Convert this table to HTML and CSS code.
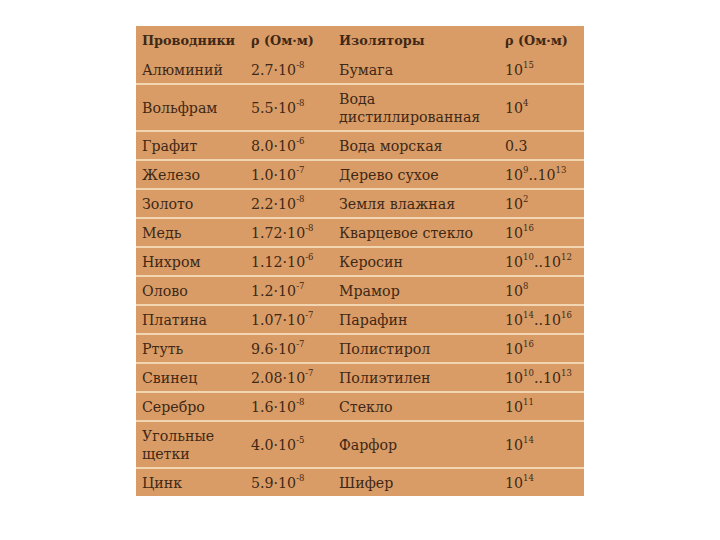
FILE: index.html
```html
<!DOCTYPE html>
<html lang="ru">
<head>
<meta charset="utf-8">
<link rel="stylesheet" href="styles.css">
</head>
<body>
<div class="page">
  <div class="table">
    <div class="row head">
      <div class="c">Проводники</div><div class="c">ρ (Ом·м)</div><div class="c">Изоляторы</div><div class="c">ρ (Ом·м)</div>
    </div>
    <div class="row"><div class="c">Алюминий</div><div class="c">2.7·10<sup>-8</sup></div><div class="c">Бумага</div><div class="c">10<sup>15</sup></div></div>
    <div class="row"><div class="c">Вольфрам</div><div class="c">5.5·10<sup>-8</sup></div><div class="c">Вода<br>дистиллированная</div><div class="c">10<sup>4</sup></div></div>
    <div class="row"><div class="c">Графит</div><div class="c">8.0·10<sup>-6</sup></div><div class="c">Вода морская</div><div class="c">0.3</div></div>
    <div class="row"><div class="c">Железо</div><div class="c">1.0·10<sup>-7</sup></div><div class="c">Дерево сухое</div><div class="c">10<sup>9</sup>..10<sup>13</sup></div></div>
    <div class="row"><div class="c">Золото</div><div class="c">2.2·10<sup>-8</sup></div><div class="c">Земля влажная</div><div class="c">10<sup>2</sup></div></div>
    <div class="row"><div class="c">Медь</div><div class="c">1.72·10<sup>-8</sup></div><div class="c">Кварцевое стекло</div><div class="c">10<sup>16</sup></div></div>
    <div class="row"><div class="c">Нихром</div><div class="c">1.12·10<sup>-6</sup></div><div class="c">Керосин</div><div class="c">10<sup>10</sup>..10<sup>12</sup></div></div>
    <div class="row"><div class="c">Олово</div><div class="c">1.2·10<sup>-7</sup></div><div class="c">Мрамор</div><div class="c">10<sup>8</sup></div></div>
    <div class="row"><div class="c">Платина</div><div class="c">1.07·10<sup>-7</sup></div><div class="c">Парафин</div><div class="c">10<sup>14</sup>..10<sup>16</sup></div></div>
    <div class="row"><div class="c">Ртуть</div><div class="c">9.6·10<sup>-7</sup></div><div class="c">Полистирол</div><div class="c">10<sup>16</sup></div></div>
    <div class="row"><div class="c">Свинец</div><div class="c">2.08·10<sup>-7</sup></div><div class="c">Полиэтилен</div><div class="c">10<sup>10</sup>..10<sup>13</sup></div></div>
    <div class="row"><div class="c">Серебро</div><div class="c">1.6·10<sup>-8</sup></div><div class="c">Стекло</div><div class="c">10<sup>11</sup></div></div>
    <div class="row"><div class="c">Угольные<br>щетки</div><div class="c">4.0·10<sup>-5</sup></div><div class="c">Фарфор</div><div class="c">10<sup>14</sup></div></div>
    <div class="row last"><div class="c">Цинк</div><div class="c">5.9·10<sup>-8</sup></div><div class="c">Шифер</div><div class="c">10<sup>14</sup></div></div>
  </div>
</div>
</body>
</html>
```
FILE: styles.css
```css
html, body {
  margin: 0;
  padding: 0;
  background: #ffffff;
}
.page {
  padding: 26px 0 0 136px;
}
.table {
  width: 448px;
  background: #d99c67;
  font-family: "DejaVu Serif", "Liberation Serif", serif;
  font-size: 14.2px;
  color: #3f2815;
}
.row {
  display: grid;
  grid-template-columns: 109px 88px 166px 85px;
  align-items: center;
  border-bottom: 2px solid #f2d6b2;
}
.row.head {
  border-bottom: none;
  font-weight: bold;
  font-size: 12.8px;
  height: 30px;
}
.row.head .c {
  padding-top: 2px;
  padding-bottom: 2px;
}
.row.last {
  border-bottom: none;
}
.c {
  padding: 5px 6px 4px 6px;
  line-height: 18px;
  white-space: nowrap;
}
sup {
  font-size: 8.5px;
  line-height: 0;
  vertical-align: 7px;
}
```
